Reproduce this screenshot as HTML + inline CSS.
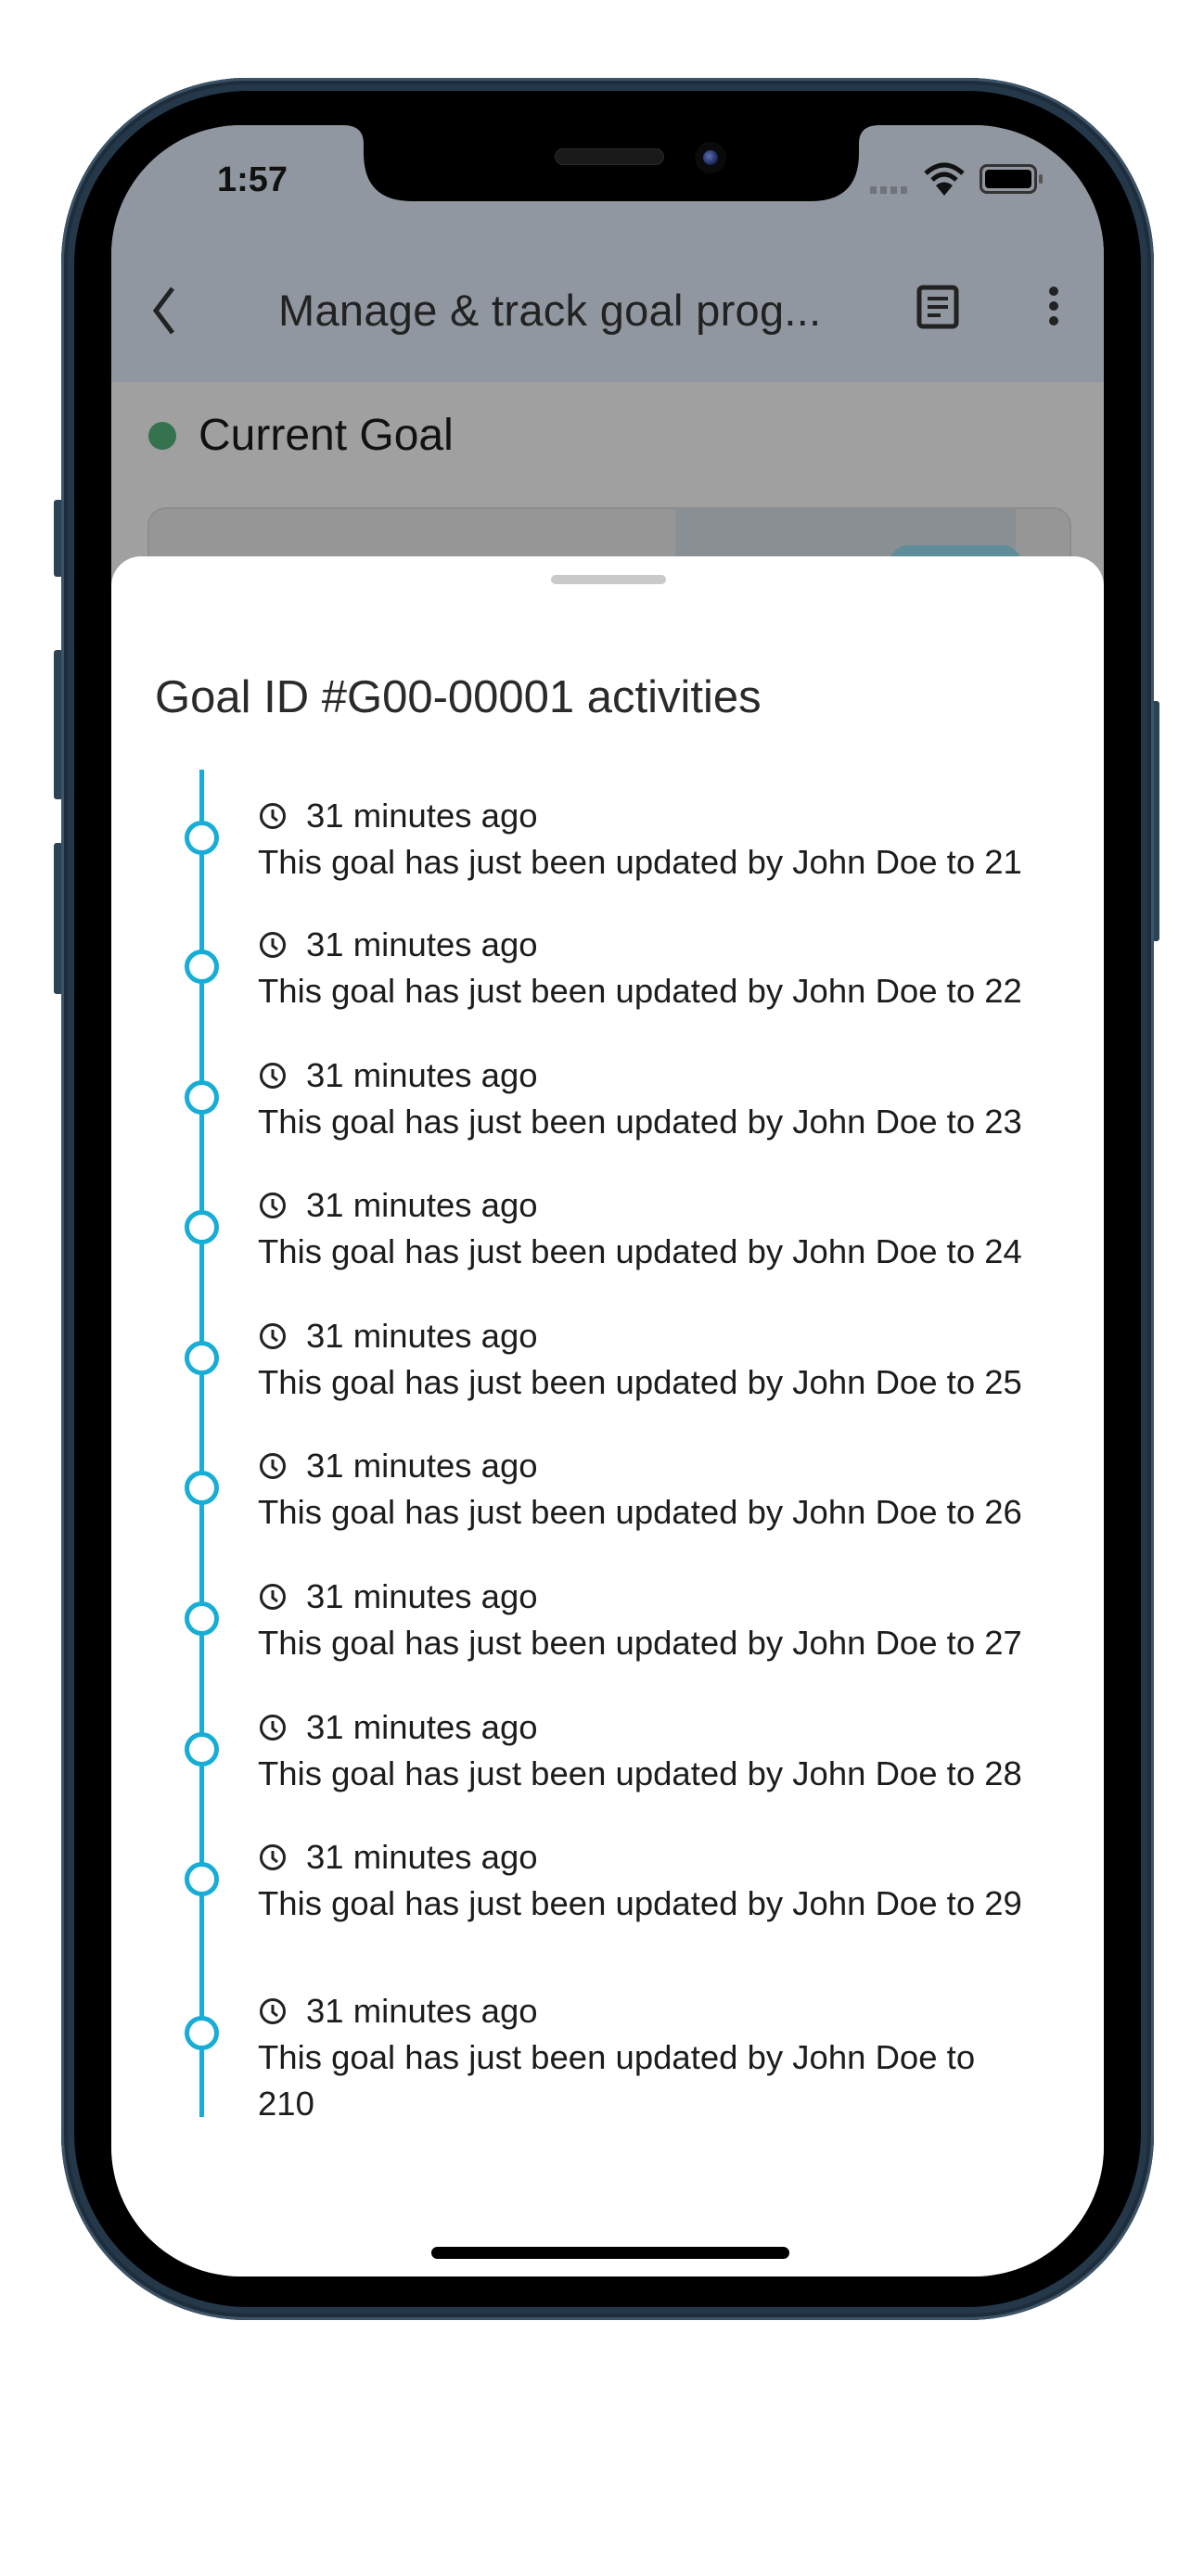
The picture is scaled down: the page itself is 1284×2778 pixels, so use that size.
<!DOCTYPE html>
<html><head><meta charset="utf-8">
<style>
*{margin:0;padding:0;box-sizing:border-box}
body{width:1284px;height:2778px;background:#fff;position:relative;overflow:hidden;font-family:"Liberation Sans",Roboto,sans-serif;color:#1c1c1e}
.abs{position:absolute}
.frame{left:66px;top:84px;width:1178px;height:2418px;border-radius:200px;background:#24384a;box-shadow:inset 0 0 0 3px #3d5468, inset 0 0 0 7px #1d2d3b}
.black{left:80px;top:98px;width:1150px;height:2390px;border-radius:188px;background:#000}
.screen{left:120px;top:135px;width:1070px;height:2320px;border-radius:140px;background:#a0a0a0;overflow:hidden}
.btn{background:#2c4356;border-radius:3px}
.t{position:absolute;font-size:36.5px;line-height:40px;white-space:nowrap;color:#1c1c1e}
</style></head><body>
<div class="abs btn" style="left:58px;top:539px;width:10px;height:83px"></div>
<div class="abs btn" style="left:58px;top:701px;width:10px;height:161px"></div>
<div class="abs btn" style="left:58px;top:909px;width:10px;height:163px"></div>
<div class="abs btn" style="left:1240px;top:756px;width:10px;height:259px"></div>
<div class="abs frame"></div>
<div class="abs black"></div>
<div class="abs screen">
  <div class="abs" style="left:0;top:0;width:1070px;height:277px;background:#9197a0"></div>
  <div class="abs" style="left:0;top:277px;width:1070px;height:500px;background:#a0a0a0"></div>
  <!-- notch -->
  <svg class="abs" style="left:250px;top:0" width="578" height="84" viewBox="0 0 578 84"><path d="M0 0 H578 Q556 0 556 20 V30 Q556 82 504 82 H74 Q22 82 22 30 V20 Q22 0 0 0 Z" fill="#000"/></svg>
  <div class="abs" style="left:478px;top:25px;width:118px;height:18px;border-radius:9px;background:#1a1a1a;border:1px solid #2a2a2a"></div>
  <div class="abs" style="left:629px;top:18px;width:34px;height:34px;border-radius:50%;background:#0a0a0a"></div>
  <div class="abs" style="left:638px;top:27px;width:16px;height:16px;border-radius:50%;background:radial-gradient(circle at 40% 40%,#5a6fb0,#1a2255 70%)"></div>
  <div class="abs" style="left:114px;top:38px;font-size:38px;font-weight:bold;color:#111">1:57</div>
  <div class="abs" style="left:818px;top:66px;width:42px;height:8px;background:repeating-linear-gradient(90deg,#6f737a 0 7px,transparent 7px 11px)"></div>
  <svg class="abs" style="left:876px;top:38px" width="44" height="40" viewBox="0 0 44 40"><path d="M2 14 Q22 -4 42 14" stroke="#111" stroke-width="5" fill="none"/><path d="M9 21 Q22 9 35 21" stroke="#111" stroke-width="5" fill="none"/><path d="M22 38 L13 27 Q22 20 31 27 Z" fill="#111"/></svg>
  <div class="abs" style="left:936px;top:42px;width:62px;height:32px;border:3px solid #333;border-radius:8px;padding:3px"><div style="width:100%;height:100%;background:#000;border-radius:4px"></div></div>
  <div class="abs" style="left:1000px;top:53px;width:4px;height:10px;background:#555;border-radius:2px"></div>
  <svg class="abs" style="left:36px;top:170px" width="40" height="60" viewBox="0 0 40 60"><path d="M30 6 L12 30 L30 54" stroke="#222" stroke-width="5" fill="none"/></svg>
  <div class="abs" style="left:180px;top:172px;font-size:47px;color:#222;white-space:nowrap;letter-spacing:0.3px">Manage &amp; track goal prog...</div>
  <svg class="abs" style="left:868px;top:172px" width="46" height="48" viewBox="0 0 46 48"><rect x="3" y="3" width="40" height="42" rx="4" stroke="#222" stroke-width="5" fill="none"/><path d="M12 15H34M12 24H34M12 33H26" stroke="#222" stroke-width="4"/></svg>
  <div class="abs" style="left:1011px;top:174px;width:10px;height:10px;border-radius:50%;background:#222;box-shadow:0 16px 0 #222,0 32px 0 #222"></div>
  <div class="abs" style="left:40px;top:320px;width:30px;height:30px;border-radius:50%;background:#35724e"></div>
  <div class="abs" style="left:94px;top:307px;font-size:48px;color:#111">Current Goal</div>
  <div class="abs" style="left:39px;top:412px;width:996px;height:120px;border-radius:20px;background:#969696;border:2px solid #8d8d8d"></div>
  <div class="abs" style="left:608px;top:414px;width:367px;height:100px;background:#8a8f93"></div>
  <div class="abs" style="left:839px;top:453px;width:142px;height:40px;border-radius:20px;background:#5f8e98"></div>
  <div class="abs" style="left:0;top:465px;width:1070px;height:1900px;background:#fff;border-radius:32px 32px 0 0"></div>
  <div class="abs" style="left:474px;top:485px;width:124px;height:10px;border-radius:5px;background:#c9c9c9"></div>
  <div class="abs" style="left:47px;top:589px;font-size:49px;color:#2a2a2a;white-space:nowrap">Goal ID #G00-00001 activities</div>
  <div class="abs" style="left:95px;top:695px;width:5px;height:1453px;background:#17add6"></div>
  <div id="items"></div>
  <div class="abs" style="left:345px;top:2288px;width:386px;height:13px;border-radius:7px;background:#000"></div>
</div>
<script>
var c=[768,907,1048,1188,1329,1469,1610,1751,1891,2057];
var h='';
for(var i=0;i<10;i++){
 var y=c[i];
 var n=i<9?(21+i):210;
 var body=i<9?'This goal has just been updated by John Doe to '+n:'This goal has just been updated by John Doe to<br>210';
 h+='<div class="abs" style="left:79px;top:'+(y-18)+'px;width:37px;height:37px;border-radius:50%;border:5px solid #17add6;background:#fff"></div>';
 h+='<svg class="abs" style="left:159px;top:'+(y-38)+'px" width="30" height="30" viewBox="0 0 30 30"><circle cx="15" cy="15" r="12.5" stroke="#222" stroke-width="3" fill="none"/><path d="M15 8V16L20 20" stroke="#222" stroke-width="3" fill="none"/></svg>';
 h+='<div class="t" style="left:210px;top:'+(y-43)+'px">31 minutes ago</div>';
 h+='<div class="t" style="left:158px;top:'+(y+7)+'px;line-height:50px;margin-top:-5px">'+body+'</div>';
}
document.getElementById('items').outerHTML=h;
</script>
</body></html>
